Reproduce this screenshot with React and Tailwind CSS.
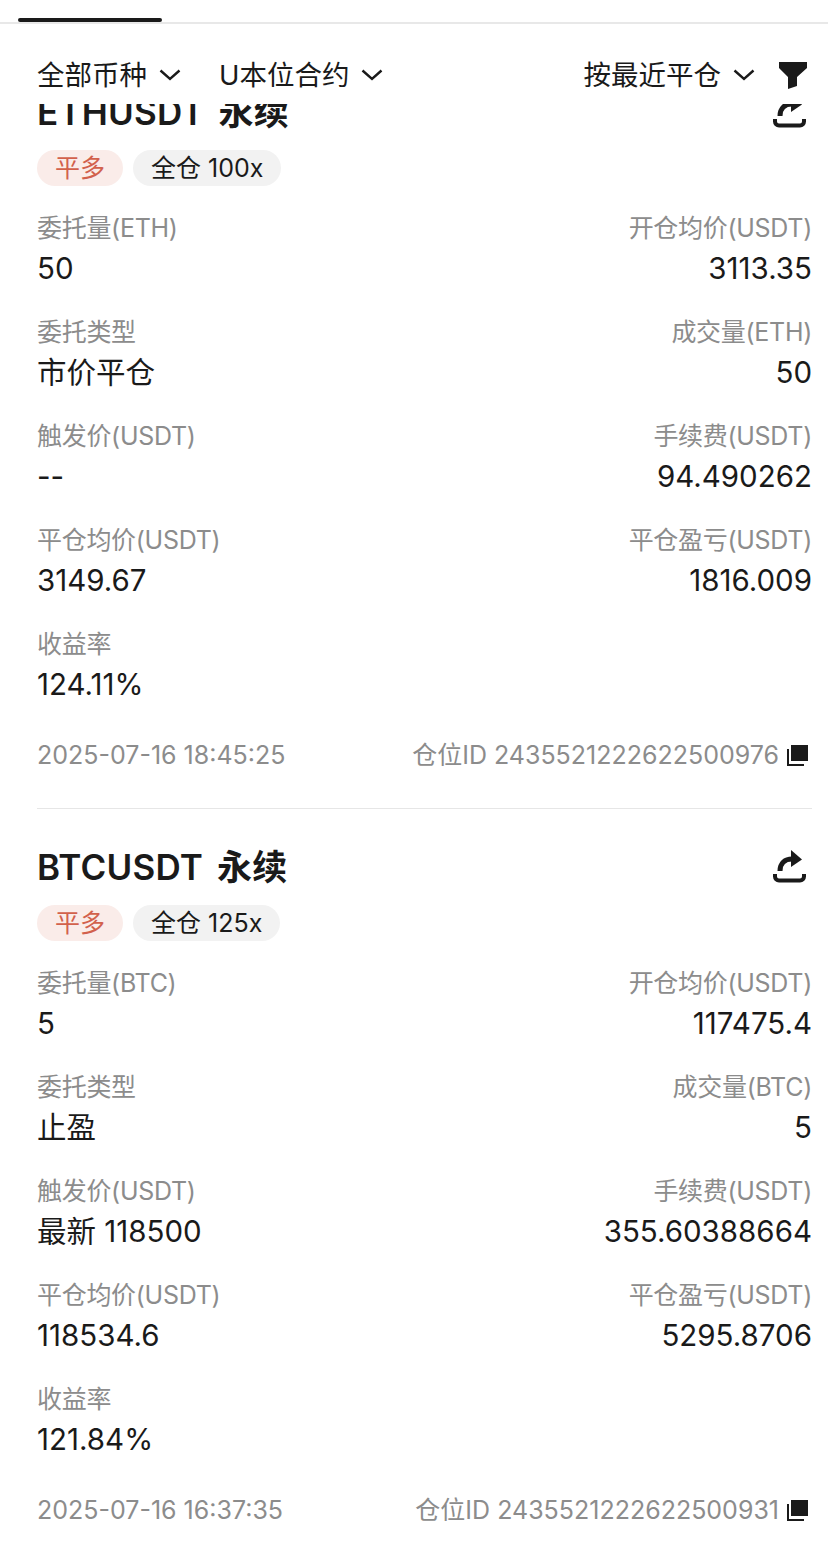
const cards = [
  {
    title: "ETHUSDT 永续",
    leverage: "全仓 100x",
    time: "2025-07-16 18:45:25",
    positionId: "仓位ID 2435521222622500976",
    rows: [
      ["委托量(ETH)", "50", "开仓均价(USDT)", "3113.35"],
      ["委托类型", "市价平仓", "成交量(ETH)", "50"],
      ["触发价(USDT)", "--", "手续费(USDT)", "94.490262"],
      ["平仓均价(USDT)", "3149.67", "平仓盈亏(USDT)", "1816.009"],
      ["收益率", "124.11%"],
    ],
  },
  {
    title: "BTCUSDT 永续",
    leverage: "全仓 125x",
    time: "2025-07-16 16:37:35",
    positionId: "仓位ID 2435521222622500931",
    rows: [
      ["委托量(BTC)", "5", "开仓均价(USDT)", "117475.4"],
      ["委托类型", "止盈", "成交量(BTC)", "5"],
      ["触发价(USDT)", "最新 118500", "手续费(USDT)", "355.60388664"],
      ["平仓均价(USDT)", "118534.6", "平仓盈亏(USDT)", "5295.8706"],
      ["收益率", "121.84%"],
    ],
  },
];

function FilterIcon() {
  return (
    <svg width="28" height="27" viewBox="0 0 28 27" fill="#1a1a1a">
      <path d="M0 0H28V6L18 15V24L9 27V15L0 6Z" />
    </svg>
  );
}

function ShareIcon() {
  return (
    <svg width="34" height="34" viewBox="0 0 34 34" fill="none" stroke="#1a1a1a">
      <path d="M3 24V26.5A4 4 0 0 0 7 30.5H28A4 4 0 0 0 32 26.5V24" strokeWidth="4" />
      <path d="M8 21C8 13 13 9 20 9" strokeWidth="5" />
      <path d="M19 0L30 9.5L19 17Z" fill="#1a1a1a" stroke="none" />
    </svg>
  );
}

function CopyIcon() {
  return (
    <svg width="21" height="21" viewBox="0 0 21 21" fill="#1a1a1a">
      <path d="M4 0H21V16H4Z" />
      <path d="M0 4H2V19H17V21H0Z" />
    </svg>
  );
}

function Chevron() {
  return (
    <svg width="22" height="12" viewBox="0 0 22 12" fill="none" stroke="#1a1a1a" strokeWidth="2.4">
      <path d="M1.5 1.5L11 10L20.5 1.5" />
    </svg>
  );
}

function Dropdown({ label }) {
  return (
    <div className="flex items-center gap-[12px]">
      <span>{label}</span>
      <Chevron />
    </div>
  );
}

function Card({ card, last }) {
  return (
    <div className={last ? "" : "border-b border-[#e6e6e6] pb-[33px]"}>
      <div className="flex items-center justify-between h-10">
        <h2 className="text-[35px] font-semibold leading-10 tracking-[0.2px] [word-spacing:5px]">{card.title}</h2>
        <div className="mr-[6px]">
          <ShareIcon />
        </div>
      </div>

      <div className="mt-[18px] flex gap-[10px] text-[25px] leading-9">
        <span className="h-9 rounded-full bg-[#faece9] px-[18px] text-[#d2614c]">平多</span>
        <span className="h-9 rounded-full bg-[#f2f2f2] px-[18px]">{card.leverage}</span>
      </div>

      <div className="mt-[22px] flex flex-col gap-6">
        {card.rows.map((row) => (
          <div key={row[0]} className="flex justify-between">
            <div>
              <div className="h-10 text-[25px] leading-10 tracking-[-0.3px] text-[#8c8c8c]">{row[0]}</div>
              <div className="h-10 text-[29.5px] leading-10">{row[1]}</div>
            </div>
            {row[2] && (
              <div className="text-right">
                <div className="h-10 text-[25px] leading-10 tracking-[-0.3px] text-[#8c8c8c]">{row[2]}</div>
                <div className="h-10 text-[29.5px] leading-10">{row[3]}</div>
              </div>
            )}
          </div>
        ))}
      </div>

      <div className="mt-[31px] flex h-10 items-center justify-between text-[25px] text-[#8c8c8c]">
        <span className="pt-[2px]">{card.time}</span>
        <div className="mr-[4px] flex items-center gap-[8px]">
          <span className="pt-[2px]">{card.positionId}</span>
          <CopyIcon />
        </div>
      </div>
    </div>
  );
}

export default function App() {
  return (
    <div className="h-[1556px] overflow-hidden bg-white text-[#1a1a1a] font-['Inter','Noto_Sans_CJK_SC',sans-serif]">
      <div className="h-6 border-b-2 border-[#e8e8e8] pl-[18px] pt-[18px]">
        <div className="h-1 w-[144px] rounded-full bg-[#1a1a1a]" />
      </div>

      <div className="flex h-[80px] items-end justify-between pb-[8px] pl-[37px] pr-[21px] text-[27.5px]">
        <div className="flex items-center gap-[38px]">
          <Dropdown label="全部币种" />
          <Dropdown label="U本位合约" />
        </div>
        <div className="flex items-center gap-[24px]">
          <Dropdown label="按最近平仓" />
          <FilterIcon />
        </div>
      </div>

      <div className="h-[1452px] overflow-hidden pl-[37px] pr-[16px]">
        <div className="-mt-3 flex flex-col gap-[38px]">
          {cards.map((card, i) => (
            <Card key={card.title} card={card} last={i === cards.length - 1} />
          ))}
        </div>
      </div>
    </div>
  );
}
